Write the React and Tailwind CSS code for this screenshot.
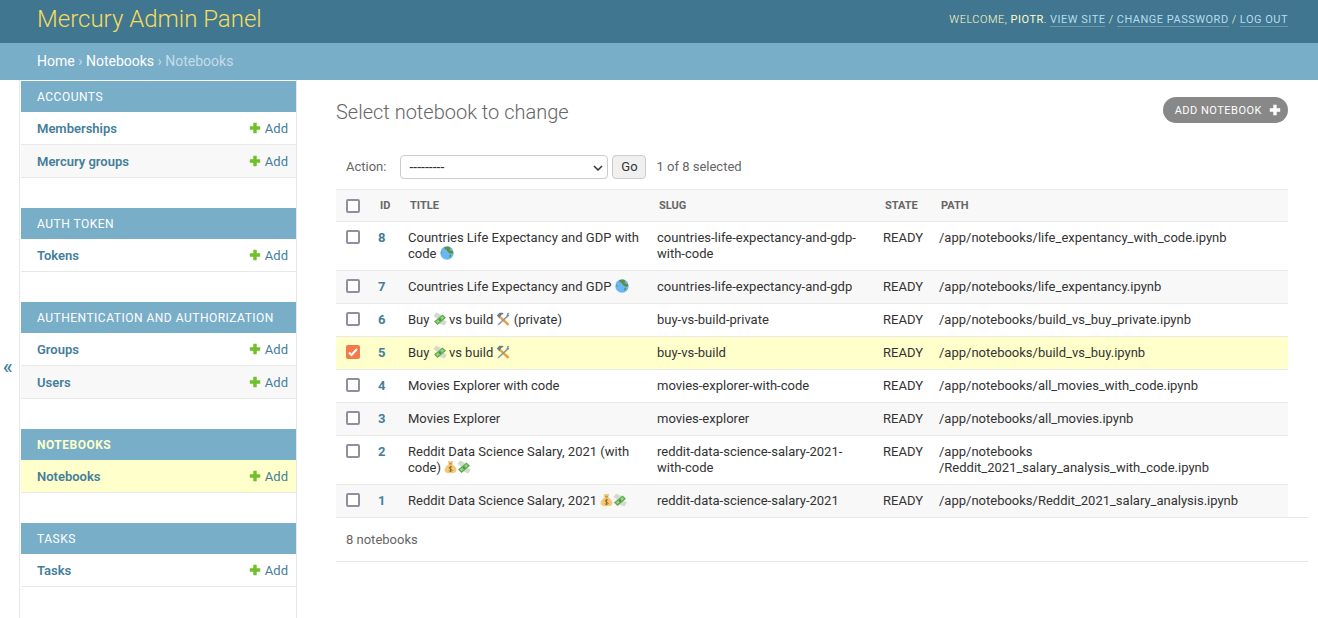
import React from "react";

const Plus = ({ c = "#70bf2b", s = 12 }) => (
  <svg width={s} height={s} viewBox="0 0 12 12" className="shrink-0 -mt-[2px]">
    <path d="M4.300 .8h3.400v3.500h3.500v3.400H7.700v3.500H4.300V7.700H.8V4.300h3.500z" fill={c} />
  </svg>
);

const Globe = () => (
  <svg width="14" height="14" viewBox="0 0 14 14" className="inline-block align-[-2px]">
    <circle cx="7" cy="7" r="6.700" fill="#69b8f5" />
    <path d="M4 1.300L8 .6l2.800 1.400-1.300 1.300.8 1.200 2.400.4.6 1.400-1.300 1.700-2.600-.8-1.900-1.700L6.500 3.800 4.800 3.300zM9.500 9l1.800-.3-.8 2.300-1.300 1zM.8 5.500L2.300 6.300 2.300 8.500z" fill="#5f8f3a" />
  </svg>
);

const Cash = () => (
  <svg width="14" height="14" viewBox="0 0 14 14" className="inline-block align-[-2px] -mr-px">
    <path d="M.5 4L3 .5l5.500 2.500-4 4zM13.800 9.500L11.500 13.500 6 11.500l4-4z" fill="#d5dacf" />
    <path d="M1 9.500L9.500 2.500l3.500 3.300L4.500 13z" fill="#5ea852" />
    <path d="M2.800 9.500L9.500 4l1.700 1.700L4.500 11.300z" fill="#93d67f" />
    <circle cx="7" cy="7.700" r="1.400" fill="#4f9544" />
  </svg>
);

const Tools = () => (
  <svg width="14" height="14" viewBox="0 0 14 14" className="inline-block align-[-2px]">
    <path d="M5 4.500l8.500 7.500-1.800 1.800L3.500 6z" fill="#ef9a38" />
    <path d="M12 2.500L2.500 11.500l-1.300 2 1.800-.5L13 4z" fill="#8f9a9f" />
    <path d="M.8 3.500L3.500.8h3.200l1 1.200-2.200.8L3.500 6.500z" fill="#6f7d85" />
    <path d="M10.500 3.500l1-2.500 2-.3-1.300 1.800 1.300 1.300-2 .5z" fill="#7d8a91" />
  </svg>
);

const Bag = () => (
  <svg width="13" height="14" viewBox="0 0 14 14" className="inline-block align-[-2px]">
    <path d="M4 .7h6L8.700 3.700H5.300z" fill="#f0bd68" />
    <path d="M5 4h4c3 2 4.700 4.500 4.300 7-.3 1.800-2.300 2.700-6.300 2.700S1 12.800.7 11C.3 8.500 2 6 5 4z" fill="#f7c873" />
    <path d="M5.200 3.700h3.600" stroke="#a8793a" strokeWidth="1" />
    <path d="M8.800 7.300C8 6.500 5.500 6.500 5.500 8c0 1.600 3.300.9 3.300 2.500 0 1.400-2.700 1.400-3.600.5M7 5.700v6.600" stroke="#8a6a32" strokeWidth="1" fill="none" />
  </svg>
);

const modules = [
  { name: "Accounts", rows: ["Memberships", "Mercury groups"] },
  { name: "Auth Token", rows: ["Tokens"] },
  { name: "Authentication and Authorization", rows: ["Groups", "Users"] },
  { name: "Notebooks", rows: ["Notebooks"], active: true },
  { name: "Tasks", rows: ["Tasks"] },
];

const notebooks = [
  { id: 8, h: "h-[49px]", title: <>Countries Life Expectancy and GDP with code <Globe /></>, slug: "countries-life-expectancy-and-gdp-with-code", path: "/app/notebooks/life_expentancy_with_code.ipynb", bg: "bg-white" },
  { id: 7, h: "h-[33px]", title: <>Countries Life Expectancy and GDP <Globe /></>, slug: "countries-life-expectancy-and-gdp", path: "/app/notebooks/life_expentancy.ipynb", bg: "bg-[#f8f8f8]" },
  { id: 6, h: "h-[33px]", title: <>Buy <Cash /> vs build <Tools /> (private)</>, slug: "buy-vs-build-private", path: "/app/notebooks/build_vs_buy_private.ipynb", bg: "bg-white" },
  { id: 5, h: "h-[33px]", title: <>Buy <Cash /> vs build <Tools /></>, slug: "buy-vs-build", path: "/app/notebooks/build_vs_buy.ipynb", bg: "bg-[#ffffcc]", checked: true },
  { id: 4, h: "h-[33px]", title: "Movies Explorer with code", slug: "movies-explorer-with-code", path: "/app/notebooks/all_movies_with_code.ipynb", bg: "bg-white" },
  { id: 3, h: "h-[33px]", title: "Movies Explorer", slug: "movies-explorer", path: "/app/notebooks/all_movies.ipynb", bg: "bg-[#f8f8f8]" },
  { id: 2, h: "h-[49px]", title: <>Reddit Data Science Salary, 2021 (with code) <Bag /><Cash /></>, slug: "reddit-data-science-salary-2021-with-code", path: <>/app/notebooks<br />/Reddit_2021_salary_analysis_with_code.ipynb</>, bg: "bg-white" },
  { id: 1, h: "h-[33px]", title: <>Reddit Data Science Salary, 2021 <Bag /><Cash /></>, slug: "reddit-data-science-salary-2021", path: "/app/notebooks/Reddit_2021_salary_analysis.ipynb", bg: "bg-[#f8f8f8]" },
];

const Check = ({ checked }) => (
  <span className={`block w-[14px] h-[14px] rounded-[2px] border-2 ${checked ? "bg-[#f57a4a] border-[#f57a4a]" : "bg-white border-[#8f8f9d]"}`}>
    {checked && (
      <svg width="10" height="10" viewBox="0 0 10 10" className="block">
        <path d="M1 5.500l2.500 2.500L9 2" stroke="#fff" strokeWidth="2" fill="none" />
      </svg>
    )}
  </span>
);

export default function App() {
  return (
    <div className="min-h-[618px] bg-white text-[14px] leading-[16px] text-[#333] overflow-hidden" style={{ fontFamily: "Roboto, 'Liberation Sans', sans-serif" }}>
      <header className="h-[43px] bg-[#417690] flex items-start justify-between pl-[37px] pr-[30px]">
        <h1 className="text-[24px] font-light text-[#f5dd5d] leading-[38px]">Mercury Admin Panel</h1>
        <div className="text-[11px] font-light tracking-[0.5px] uppercase text-[#ffffcc] pt-[13px] leading-[14px]">
          Welcome, <strong className="font-normal">Piotr</strong>.{" "}
          <a className="text-[#b5dcef] border-b border-[#ffffff40] font-normal">View site</a> /{" "}
          <a className="text-[#b5dcef] border-b border-[#ffffff40] font-normal">Change password</a> /{" "}
          <a className="text-[#b5dcef] border-b border-[#ffffff40] font-normal">Log out</a>
        </div>
      </header>
      <div className="h-[37px] bg-[#79aec8] pl-[37px] pb-[1px] flex items-center text-[#c4dce8]">
        <a className="text-white">Home</a><span className="mx-[3.500px]">›</span><a className="text-white">Notebooks</a><span className="mx-[3.500px]">›</span>Notebooks
      </div>
      <div className="flex">
        <div className="w-[19px] shrink-0 pl-[3px] pt-[274px] text-[#447e9b] text-[20px] leading-[24px] font-medium">«</div>
        <nav className="w-[278px] shrink-0 border-x border-[#e8e8e8] min-h-[538px] pt-px pl-px">
          {modules.map((m) => (
            <section key={m.name} className="mb-[30px]">
              <h2 className={`h-[31px] bg-[#79aec8] pl-[16px] flex items-center text-[12px] uppercase tracking-[0.5px] ${m.active ? "text-[#ffffcc] font-bold" : "text-white"}`}>{m.name}</h2>
              {m.rows.map((r, i) => (
                <div key={r} className={`h-[33px] border-b border-[#e8e8e8] pl-[16px] pr-[8px] pt-[1px] flex items-center justify-between ${m.active ? "bg-[#ffffcc]" : i % 2 ? "bg-[#f8f8f8]" : "bg-white"}`}>
                  <a className="font-semibold text-[13px] text-[#447e9b]">{r}</a>
                  <a className="flex items-center gap-[4px] text-[13px] text-[#447e9b]"><Plus />Add</a>
                </div>
              ))}
            </section>
          ))}
        </nav>
        <main className="flex-1 min-w-0 pl-[39px] pr-[30px]">
          <div className="h-[64px] flex items-start justify-between pt-[17px]">
            <h1 className="text-[20px] font-light text-[#666] leading-[30px]">Select notebook to change</h1>
            <a className="h-[26px] rounded-[13px] bg-[#888] text-white text-[11px] tracking-[0.5px] uppercase pl-[12px] pr-[7px] pt-px flex items-center gap-[7px]">Add notebook <Plus c="#fff" s={12} /></a>
          </div>
          <div className="h-[24px] flex items-center text-[13px] text-[#666] pl-[10px] mt-[11px] mb-[10px]">
            <label>Action:</label>
            <div className="relative ml-[14px] w-[208px]">
              <select className="block w-full h-[24px] appearance-none border border-[#ccc] rounded-[4px] bg-white pl-[8px] text-[14px] text-[#333]">
                <option>---------</option>
              </select>
              <svg width="10" height="6" viewBox="0 0 10 6" className="absolute right-[5px] top-[10px]"><path d="M1 1l4 4 4-4" stroke="#333" strokeWidth="1.500" fill="none" /></svg>
            </div>
            <button className="ml-[4px] w-[34px] h-[24px] border border-[#ccc] rounded-[4px] bg-[#f0f0f0] text-[#333] text-[13px]">Go</button>
            <span className="ml-[10px]">1 of 8 selected</span>
          </div>
          <table className="w-[952px] table-fixed border-collapse">
            <colgroup>
              <col className="w-[34px]" /><col className="w-[28px]" /><col className="w-[249px]" /><col className="w-[226px]" /><col className="w-[56px]" /><col />
            </colgroup>
            <thead>
              <tr className="h-[32px] bg-[#f8f8f8] border-y border-[#e8e8e8] text-[11px] uppercase font-bold text-[#666] text-left">
                <th className="pl-[10px] font-bold"><Check /></th>
                <th className="pl-[10px] font-bold">ID</th>
                <th className="pl-[12px] font-bold">Title</th>
                <th className="pl-[12px] font-bold">Slug</th>
                <th className="pl-[12px] font-bold">State</th>
                <th className="pl-[12px] font-bold">Path</th>
              </tr>
            </thead>
            <tbody className="text-[13px]">
              {notebooks.map((n) => (
                <tr key={n.id} className={`${n.h} ${n.bg} border-b border-[#e8e8e8] align-top`}>
                  <td className="pl-[10px] pt-[8px]"><Check checked={n.checked} /></td>
                  <td className="pl-[8px] pt-[8px] font-bold text-[#447e9b]">{n.id}</td>
                  <td className="pl-[10px] pr-[8px] pt-[8px]">{n.title}</td>
                  <td className="px-[10px] pt-[8px] break-words">{n.slug}</td>
                  <td className="px-[10px] pt-[8px]">READY</td>
                  <td className="px-[10px] pt-[8px] break-words">{n.path}</td>
                </tr>
              ))}
            </tbody>
          </table>
          <div className="h-[45px] -mr-[20px] border-y border-[#e8e8e8] flex items-center pl-[10px] pt-px text-[13px] text-[#666] relative mt-[-1px]">8 notebooks</div>
        </main>
      </div>
    </div>
  );
}
